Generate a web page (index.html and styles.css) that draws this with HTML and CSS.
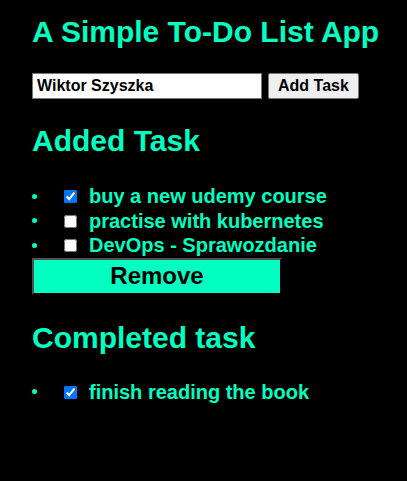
FILE: index.html
```html
<!DOCTYPE html>
<html lang="en">
<head>
<meta charset="utf-8">
<title>A Simple To-Do List App</title>
<link rel="stylesheet" href="styles.css">
</head>
<body>
<div class="app">
  <h1 class="title">A Simple To-Do List App</h1>
  <form class="add-form">
    <input class="task-input" type="text" value="Wiktor Szyszka"><button class="add-btn" type="button">Add Task</button>
  </form>

  <h2 class="section-title">Added Task</h2>
  <ul class="task-list">
    <li class="task"><input class="task-check" type="checkbox" checked><span class="task-text">buy a new udemy course</span></li>
    <li class="task"><input class="task-check" type="checkbox"><span class="task-text">practise with kubernetes</span></li>
    <li class="task"><input class="task-check" type="checkbox"><span class="task-text">DevOps - Sprawozdanie</span></li>
  </ul>
  <button class="remove-btn" type="button">Remove</button>

  <h2 class="section-title completed">Completed task</h2>
  <ul class="task-list">
    <li class="task"><input class="task-check" type="checkbox" checked><span class="task-text">finish reading the book</span></li>
  </ul>
</div>
</body>
</html>
```
FILE: styles.css
```css
html, body {
  margin: 0;
  background: #000;
}

body {
  font-family: "Liberation Sans", Arial, sans-serif;
  color: #00ffc0;
}

.app {
  padding: 15px 8px 0 32px;
}

.title,
.section-title {
  margin: 0;
  font-size: 30px;
  line-height: 34px;
  font-weight: bold;
  color: #00ffc0;
  white-space: nowrap;
}

.add-form {
  display: flex;
  gap: 6px;
  margin: 24px 0 0;
}

.task-input {
  box-sizing: border-box;
  width: 230px;
  height: 26px;
  margin: 0;
  padding: 1px 4px;
  border: 1px solid #767676;
  background: #fff;
  color: #000;
  font-family: "Liberation Sans", Arial, sans-serif;
  font-size: 16px;
  font-weight: bold;
}

.add-btn {
  box-sizing: border-box;
  height: 26px;
  margin: 0;
  padding: 0 9px;
  border: 1px solid #767676;
  border-radius: 2px;
  background: #efefef;
  color: #000;
  font-family: "Liberation Sans", Arial, sans-serif;
  font-size: 16px;
  font-weight: bold;
}

.section-title {
  margin-top: 25px;
}

.section-title.completed {
  margin-top: 26px;
}

.task-list {
  list-style: none;
  margin: 26px 0 0;
  padding: 0;
}

.section-title.completed + .task-list {
  margin-top: 25px;
}

.task {
  font-size: 20px;
  line-height: 24.5px;
  font-weight: bold;
  white-space: nowrap;
}

.task::before {
  content: "";
  display: inline-block;
  width: 5px;
  height: 5px;
  border-radius: 50%;
  background: #00ffc0;
  margin-right: 27px;
  vertical-align: 4.5px;
}

.task-check {
  width: 13px;
  height: 13px;
  margin: 3px 12px 3px 0;
}

.remove-btn {
  display: block;
  box-sizing: border-box;
  width: 250px;
  height: 37px;
  margin: 0;
  padding: 0;
  border-style: solid;
  border-width: 2px;
  border-color: #505050 #000 #000 #505050;
  background: #00ffc0;
  color: #000;
  font-family: "Liberation Sans", Arial, sans-serif;
  font-size: 24px;
  font-weight: bold;
}
```
